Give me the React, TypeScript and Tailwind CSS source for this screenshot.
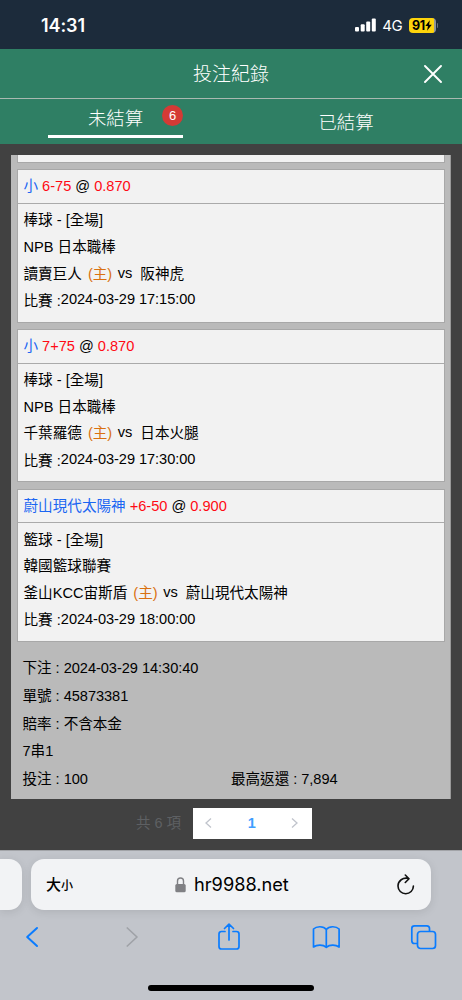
import type { ReactNode } from 'react';

interface Bet {
    pick: string;
    handicap: string;
    odds: string;
    sport: string;
    league: string;
    home: string;
    away: string;
    time: string;
}

const bets: Bet[] = [
    { pick: '小', handicap: '6-75', odds: '0.870', sport: '棒球', league: 'NPB 日本職棒', home: '讀賣巨人', away: '阪神虎', time: '2024-03-29 17:15:00' },
    { pick: '小', handicap: '7+75', odds: '0.870', sport: '棒球', league: 'NPB 日本職棒', home: '千葉羅德', away: '日本火腿', time: '2024-03-29 17:30:00' },
    { pick: '蔚山現代太陽神', handicap: '+6-50', odds: '0.900', sport: '籃球', league: '韓國籃球聯賽', home: '釜山KCC宙斯盾', away: '蔚山現代太陽神', time: '2024-03-29 18:00:00' },
];

const StatusBar = () => (
    <div className="flex h-[49px] items-center justify-between bg-[#1c2b3b] pt-px pr-[24px] pl-[41px] text-white">
        <span className="pt-px font-['Inter'] text-[18px] leading-none font-semibold tracking-[-0.1px]">14:31</span>
        <div className="flex items-center">
            <svg width="21" height="14" viewBox="0 0 21 14" fill="#fff" className="mr-[6px]">
                <rect x="0" y="9" width="4" height="4.5" rx="1" />
                <rect x="5.7" y="6.3" width="4" height="7.2" rx="1" />
                <rect x="11.2" y="3.6" width="4" height="9.9" rx="1" />
                <rect x="16.8" y="0.5" width="4" height="13" rx="1" />
            </svg>
            <span className="mr-[6px] font-['Inter'] text-[15px] leading-none tracking-[-0.3px]">4G</span>
            <div className="flex h-[15px] w-[27px] items-center justify-center overflow-hidden rounded-[4px] bg-[linear-gradient(90deg,#fdd40b_92%,#8f959c_92%)] text-black">
                <span className="pt-px font-['Inter'] text-[12.5px] leading-[15px] font-bold tracking-[-0.2px]">91</span>
                <svg width="7" height="11" viewBox="0 0 7 11">
                    <path d="M4.8 0.3 0.3 6.1h2.6L2.1 10.7 6.8 4.7H4.1z" fill="#000" />
                </svg>
            </div>
            <div className="ml-px h-[5px] w-[1.5px] rounded-r bg-[#66707b]" />
        </div>
    </div>
);

const Header = () => (
    <div className="grid h-[50px] grid-cols-[1fr_auto_1fr] items-center border-b border-[#a9b9b1] bg-[#2f7f64] text-white">
        <span />
        <h1 className="pt-[2px] text-[19px] leading-none font-light">投注紀錄</h1>
        <svg width="18" height="18" viewBox="0 0 18 18" className="mr-[20px] justify-self-end" stroke="#fff" strokeWidth="1.9" strokeLinecap="round">
            <path d="M1 1 17 17M17 1 1 17" />
        </svg>
    </div>
);

const Tabs = () => (
    <div className="grid h-[45px] grid-cols-2 bg-[#2f7f64] text-[18.4px] leading-none font-light text-white">
        <div className="flex justify-center">
            <div className="relative flex h-[39px] w-[135px] items-center justify-center border-b-[3px] border-white pt-[5px]">
                未結算
                <span className="absolute top-[6px] right-0 flex h-[21px] w-[21px] items-center justify-center rounded-full bg-[#d43a35] text-[13px] font-normal">6</span>
            </div>
        </div>
        <div className="flex h-[45px] items-center justify-center pt-[4px] pr-px">已結算</div>
    </div>
);

const BetCard = ({ bet }: { bet: Bet }) => (
    <div className="h-[153.3px] border border-[#a8a8a8] bg-[#f2f2f2]">
        <div className="flex h-[33.5px] items-center gap-[4px] border-b border-[#aaa] px-[5.5px] pt-px">
            <span className="text-[#1b66f2]">{bet.pick}</span>
            <span className="text-[#ff0a14]">{bet.handicap}</span>
            <span>@</span>
            <span className="text-[#ff0a14]">{bet.odds}</span>
        </div>
        <div className="px-[5.5px] pt-[3.6px] leading-[26.6px]">
            <p>{bet.sport} - [全場]</p>
            <p>{bet.league}</p>
            <p className="flex h-[26.6px]">
                <span>{bet.home}</span>
                <span className="ml-[6px] text-[#d9700f]">(主)</span>
                <span className="ml-[5.5px] leading-[24px]">vs</span>
                <span className="ml-[8px]">{bet.away}</span>
            </p>
            <p className="flex h-[26.6px]">
                <span className="pt-[0.6px]">比賽 :</span>
                <span className="leading-[24px] tracking-[-0.05px]">{bet.time}</span>
            </p>
        </div>
    </div>
);

const Pagination = () => (
    <div className="mt-[8px] flex h-[32px] items-center pl-[136px]">
        <span className="w-[56.5px] pt-px text-[14.5px] text-[#5e6063]">共 6 項</span>
        <div className="flex h-[31px] w-[119.5px] items-center justify-between bg-white pr-[13.5px] pl-[12.5px]">
            <svg width="7" height="10" viewBox="0 0 7 10" fill="none" stroke="#c0c4cc" strokeWidth="1.3">
                <path d="M6 0.5 1 5 6 9.5" />
            </svg>
            <span className="pt-px text-[14.5px] font-bold text-[#409eff]">1</span>
            <svg width="7" height="10" viewBox="0 0 7 10" fill="none" stroke="#c0c4cc" strokeWidth="1.3">
                <path d="M1 0.5 6 5 1 9.5" />
            </svg>
        </div>
    </div>
);

const ToolIcon = ({ width, children, color = '#0a7cff' }: { width: number; children: ReactNode; color?: string }) => (
    <svg width={width} height="28" viewBox={`0 0 ${width} 28`} fill="none" stroke={color} strokeWidth="1.7" strokeLinecap="round" strokeLinejoin="round">
        {children}
    </svg>
);

const BrowserBar = () => (
    <div className="h-[150px] overflow-hidden border-t border-[#a2a4a8] bg-[#c2c5cb]">
        <div className="flex gap-[9px] pt-[8px]">
            <div className="h-[51px] w-[22px] rounded-r-[13px] bg-[#f2f3f5] shadow-[0_2px_10px_rgba(0,0,0,0.1)]" />
            <div className="flex h-[51px] w-[400px] items-center rounded-[13px] bg-[#f2f3f5] pl-[15px] text-black shadow-[0_2px_10px_rgba(0,0,0,0.1)]">
                <div className="flex w-[129px] items-baseline pt-px font-medium">
                    <span className="text-[15px]">大</span>
                    <span className="text-[12px]">小</span>
                </div>
                <svg width="11" height="16" viewBox="0 0 11 16" className="mr-[8px]">
                    <rect x="0.3" y="7" width="10.4" height="8.3" rx="1.5" fill="#808084" />
                    <path d="M2.5 7.5V4a3 3 0 0 1 6 0v3.5" fill="none" stroke="#808084" strokeWidth="1.4" />
                </svg>
                <span className="w-[202px] pt-px font-['Inter'] text-[18.2px]">hr9988.net</span>
                <svg width="20" height="22" viewBox="0 0 20 22" fill="none" stroke="#111" strokeWidth="1.6" strokeLinecap="round" strokeLinejoin="round">
                    <path d="M12.5 4.5C7 3.1 2 6.7 2 12a7.7 7.7 0 0 0 15.4 0M9.3 1l3.7 3.7-3.7 3.8" />
                </svg>
            </div>
        </div>
        <div className="mt-[13px] flex h-[28px] items-center">
            <div className="ml-[25px] w-[100px]">
                <ToolIcon width={14}>
                    <path d="M12 5 2.2 14 12 23" strokeWidth="2" />
                </ToolIcon>
            </div>
            <div className="w-[92px]">
                <ToolIcon width={14} color="#9fa2a7">
                    <path d="M2.3 5 12 14 2.3 23" />
                </ToolIcon>
            </div>
            <div className="w-[95px]">
                <ToolIcon width={24}>
                    <path d="M8 8.5H4.5Q2 8.5 2 11V23.5Q2 26 4.5 26H19.5Q22 26 22 23.5V11Q22 8.5 19.5 8.5H16M12 17V1.5M7.5 5.5 12 1.2 16.5 5.5" />
                </ToolIcon>
            </div>
            <div className="w-[98px]">
                <ToolIcon width={29}>
                    <path d="M14.3 6.5C11.5 2.8 4.5 3 1.5 6V24C5 21.5 11 21.5 14.3 24.3C17.6 21.5 23.6 21.5 27.1 24V6C24.1 3 17.1 2.8 14.3 6.5ZV24" />
                </ToolIcon>
            </div>
            <ToolIcon width={28}>
                <rect x="7.5" y="8.5" width="18" height="17" rx="3" />
                <path d="M7 20.5H4.5Q1.8 20.5 1.8 17.8V5.5Q1.8 2.8 4.5 2.8H16.8Q19.5 2.8 19.5 5.5V8" />
            </ToolIcon>
        </div>
        <div className="mt-[34px] ml-[148px] h-[6px] w-[166px] rounded-full bg-black" />
    </div>
);

export default function App() {
    return (
        <div className="h-[1000px] w-[462px] overflow-hidden bg-[#414141] font-['Liberation_Sans','Noto_Sans_CJK_TC',sans-serif] text-[14.6px] text-black">
            <StatusBar />
            <Header />
            <Tabs />
            <div className="h-[706px] pt-[11px]">
                <div className="ml-[11px] h-[644px] w-[440px] overflow-hidden border-r border-[#999] bg-[#bababa] pr-[5px] pl-[6px]">
                    {/* tail of the previous card, scrolled out of view */}
                    <div className="mb-[6.4px] h-[8px] border border-t-0 border-[#a8a8a8] bg-[#f2f2f2]" />
                    <div className="flex flex-col gap-[6.4px]">
                        {bets.map((bet) => (
                            <BetCard key={bet.time} bet={bet} />
                        ))}
                    </div>
                    <div className="pt-[13px] pl-[5.5px] leading-[27.8px] tracking-[-0.04px]">
                        <p>下注 : 2024-03-29 14:30:40</p>
                        <p>單號 : 45873381</p>
                        <p>賠率 : 不含本金</p>
                        <p>7串1</p>
                        <div className="flex">
                            <p className="w-[208.5px]">投注 : 100</p>
                            <p>最高返還 : 7,894</p>
                        </div>
                    </div>
                </div>
                <Pagination />
            </div>
            <BrowserBar />
        </div>
    );
}
